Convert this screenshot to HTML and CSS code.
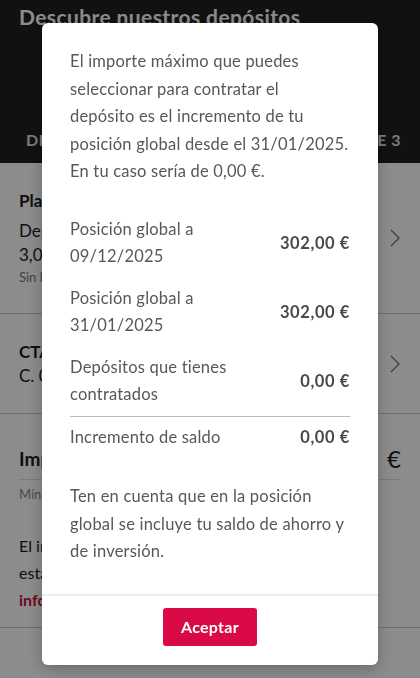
FILE: index.html
```html
<!DOCTYPE html>
<html lang="es">
<head>
    <meta charset="UTF-8">
    <meta name="viewport" content="width=device-width, initial-scale=1.0">
    <title>Descubre nuestros depósitos</title>
    <link rel="stylesheet" href="styles.css">
</head>
<body>
    <div class="page">
        <header class="hero">
            <h1 class="hero-title">Descubre nuestros depósitos</h1>
            <nav class="tabs">
                <span class="tab">DISPONIBLES</span>
                <span class="tab">MÁS DE 3</span>
            </nav>
        </header>

        <div class="item">
            <div class="item-text">
                <div class="item-title">Plazo fijo 12 meses</div>
                <div class="item-line">Depósito a 12 meses</div>
                <div class="item-line">3,00 % TAE</div>
                <div class="item-note">Sin liquidez anticipada</div>
            </div>
            <svg class="chevron" width="12" height="20" viewBox="0 0 12 20"><path d="M2 2l8 8-8 8" fill="none" stroke="#777" stroke-width="1.4"/></svg>
        </div>

        <div class="item item-small">
            <div class="item-text">
                <div class="item-title">CTA. AHORRO</div>
                <div class="item-line tight">C. 0049 1500 05 1234567890</div>
            </div>
            <svg class="chevron" width="12" height="20" viewBox="0 0 12 20"><path d="M2 2l8 8-8 8" fill="none" stroke="#777" stroke-width="1.4"/></svg>
        </div>

        <div class="amount-box">
            <div class="amount-row">
                <span class="amount-label">Importe a contratar</span>
                <span class="amount-euro">€</span>
            </div>
            <div class="amount-hint">Mínimo 3.000,00 €</div>
            <p class="amount-info">El importe máximo que puedes contratar<br>está limitado por tu posición global.<br><span class="link">información</span></p>
        </div>
    </div>

    <div class="overlay">
        <div class="modal">
            <div class="modal-body">
                <p class="modal-text">El importe máximo que puedes<br>seleccionar para contratar el<br>depósito es el incremento de tu<br>posición global desde el 31/01/2025.<br>En tu caso sería de 0,00 €.</p>

                <div class="rows">
                    <div class="row">
                        <span class="row-label">Posición global a 09/12/2025</span>
                        <span class="row-value">302,00 €</span>
                    </div>
                    <div class="row">
                        <span class="row-label">Posición global a 31/01/2025</span>
                        <span class="row-value">302,00 €</span>
                    </div>
                    <div class="row row-last">
                        <span class="row-label">Depósitos que tienes contratados</span>
                        <span class="row-value">0,00 €</span>
                    </div>
                    <div class="row">
                        <span class="row-label">Incremento de saldo</span>
                        <span class="row-value">0,00 €</span>
                    </div>
                </div>

                <p class="modal-text">Ten en cuenta que en la posición global se incluye tu saldo de ahorro y de inversión.</p>
            </div>
            <div class="modal-footer">
                <button class="btn">Aceptar</button>
            </div>
        </div>
    </div>
</body>
</html>
```

FILE: styles.css
```css
html, body {
    margin: 0;
    padding: 0;
    height: 100%;
}
body {
    font-family: Lato, "Open Sans", sans-serif;
    background: #fff;
    color: #1a1a1a;
    overflow: hidden;
}
.page {
    height: 100%;
}
.hero {
    background: #1f1f1f;
    height: 163px;
    display: flex;
    flex-direction: column;
    justify-content: space-between;
}
.hero-title {
    margin: 0;
    padding: 4px 19px 0;
    font-size: 21px;
    font-weight: 700;
    color: #fff;
    white-space: nowrap;
    letter-spacing: 0.4px;
}
.tabs {
    display: flex;
    justify-content: space-between;
    padding: 0 19px 14px 26px;
}
.tab {
    font-size: 16px;
    font-weight: 700;
    color: #e0e0e0;
    letter-spacing: 0.5px;
}
.item {
    display: flex;
    align-items: center;
    justify-content: space-between;
    padding: 0 19px;
    height: 150px;
    border-bottom: 1px solid #c8c8c8;
}
.item-small {
    height: 99px;
}
.item-title {
    font-size: 17px;
    font-weight: 700;
    line-height: 24px;
    margin-bottom: 6px;
}
.item-line {
    font-size: 17px;
    line-height: 24px;
}
.item-line.tight {
    margin-top: -6px;
}
.item-note {
    font-size: 13px;
    color: #777;
    line-height: 20px;
}
.chevron {
    flex: none;
}
.amount-box {
    padding: 30px 19px 0;
    height: 183px;
    border-bottom: 1px solid #c8c8c8;
}
.amount-row {
    display: flex;
    justify-content: space-between;
    align-items: center;
    padding-bottom: 6px;
    border-bottom: 1px solid #e0e0e0;
}
.amount-label {
    font-size: 19px;
    font-weight: 700;
}
.amount-euro {
    font-size: 24px;
}
.amount-hint {
    font-size: 13px;
    color: #888;
    margin-top: 6px;
}
.amount-info {
    margin: 30px 0 0;
    font-size: 16px;
    line-height: 27px;
}
.link {
    color: #c8103e;
    font-weight: 700;
}

/* modal */
.overlay {
    position: fixed;
    inset: 0;
    background: rgba(0, 0, 0, 0.45);
    display: flex;
    justify-content: center;
    align-items: flex-start;
    padding-top: 23px;
}
.modal {
    width: 336px;
    background: #fff;
    border-radius: 6px;
    box-shadow: 0 4px 16px rgba(0, 0, 0, 0.25);
}
.modal-body {
    padding: 25px 28px 28px;
}
.modal-text {
    margin: 0;
    font-size: 16.5px;
    line-height: 27.5px;
    letter-spacing: 0.2px;
    color: #585858;
}
.rows {
    margin: 23px 0 25px;
}
.row {
    display: flex;
    justify-content: space-between;
    align-items: center;
    padding: 7px 0;
}
.row-last {
    border-bottom: 1px solid #bdbdbd;
}
.row-label {
    max-width: 170px;
    font-size: 16.5px;
    line-height: 27.5px;
    letter-spacing: 0.2px;
    color: #585858;
}
.row-value {
    font-size: 16.5px;
    font-weight: 700;
    letter-spacing: 0.6px;
    color: #4a4a4a;
}
.modal-footer {
    border-top: 2px solid #eeeeee;
    padding: 12px 0 19px;
    display: flex;
    justify-content: center;
}
.btn {
    width: 94px;
    height: 38px;
    border: none;
    border-radius: 3px;
    background: #d90a45;
    color: #fff;
    font-family: Lato, sans-serif;
    font-size: 16px;
    font-weight: 700;
    letter-spacing: 0.3px;
}
```
